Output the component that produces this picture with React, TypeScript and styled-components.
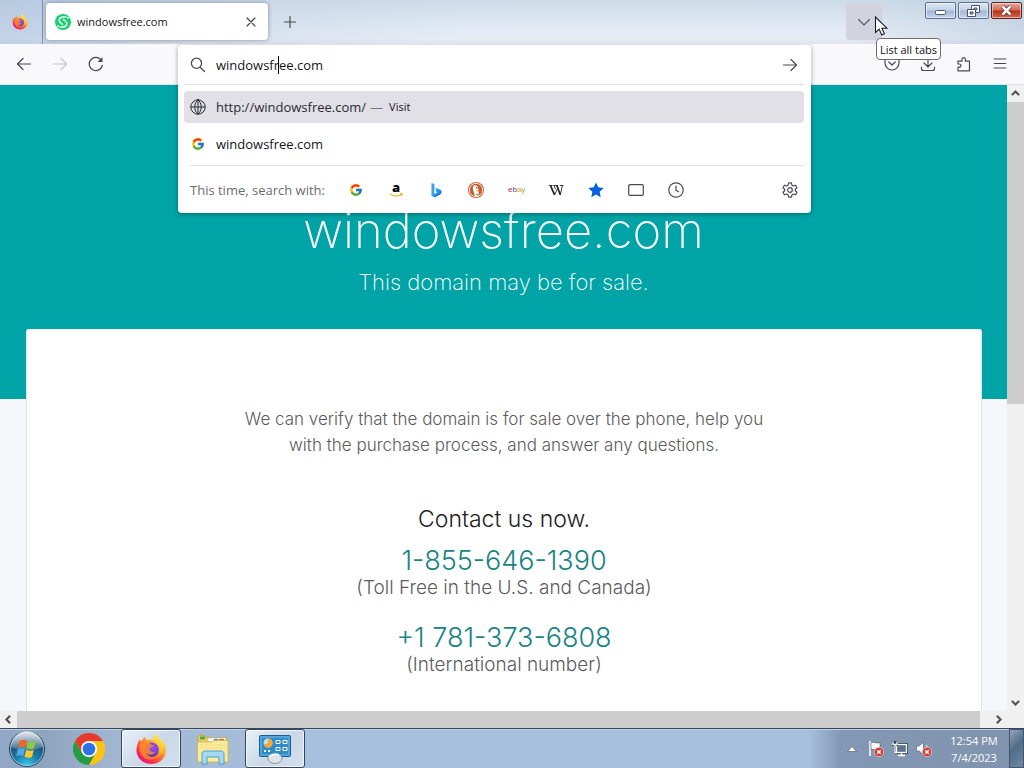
import React from "react";
import styled, { createGlobalStyle, css } from "styled-components";
import { FcGoogle } from "react-icons/fc";

const uiFont = `"Open Sans", "Noto Sans", sans-serif`;
const siteFont = `Inter, "Liberation Sans", sans-serif`;

const GlobalStyle = createGlobalStyle`
  * { box-sizing: border-box; }
  body { margin: 0; overflow: hidden; background: #fff; }
  button, input { font: inherit; color: inherit; border: 0; background: none; padding: 0; margin: 0; }
  h1, h2, p { margin: 0; font-weight: inherit; }
  svg { display: block; flex: none; }
`;

const Desktop = styled.div`
  display: flex;
  flex-direction: column;
  height: 100vh;
  font: 13px/18px ${uiFont};
  color: #15141a;
`;

/* ---------- tab strip ---------- */

const TabStrip = styled.header`
  position: relative;
  z-index: 3;
  display: flex;
  align-items: flex-start;
  height: 44px;
  padding-top: 3px;
  background:
    linear-gradient(90deg, rgba(160, 184, 216, 0.5), rgba(190, 205, 228, 0.3) 25%, rgba(255, 255, 255, 0) 45%, rgba(255, 255, 255, 0) 82%, rgba(170, 192, 215, 0.45)),
    linear-gradient(#cddbe8, #dbe6f1 45%, #e8edf5 88%, #dfe4ec);
`;

const PinnedTab = styled.button`
  display: grid;
  place-items: center;
  width: 40px;
  height: 38px;
`;

const Divider = styled.span`
  width: 1px;
  height: 44px;
  margin: -3px 3px 0 2px;
  background: #8593aa;
`;

const Tab = styled.div`
  display: flex;
  align-items: center;
  gap: 6px;
  width: 222px;
  height: 37px;
  padding: 0 9px;
  border-radius: 4px;
  background: #fff;
  box-shadow: 0 0 4px rgba(60, 70, 90, 0.5);
  font-size: 11px;
`;

const TabTitle = styled.span`
  flex: 1;
`;

const IconButton = styled.button<{ $size?: number }>`
  display: grid;
  place-items: center;
  flex: none;
  width: ${(p) => p.$size ?? 36}px;
  height: ${(p) => p.$size ?? 36}px;
  border-radius: 4px;
  color: #4a4953;
`;

const NewTab = styled(IconButton)`
  margin-left: 4px;
  height: 38px;
`;

const ListTabs = styled(IconButton)`
  height: 37px;
  margin-left: auto;
  background: #d2d3df;
  color: #5b5b66;
`;

const WindowControls = styled.div`
  display: flex;
  gap: 2px;
  margin: -1px 2px 0 43px;
`;

const WindowButton = styled.button<{ $close?: boolean }>`
  display: grid;
  place-items: center;
  width: 31px;
  height: 17px;
  border: 1px solid #5d6f8c;
  border-radius: 2px;
  box-shadow: inset 0 0 0 1px rgba(255, 255, 255, 0.5);
  background: linear-gradient(#dbe6f3, #c3d2e6 48%, #a3b7d3 52%, #c2d4e8);
  ${(p) =>
    p.$close &&
    css`
      border-color: #5a2323;
      background: linear-gradient(#e6a99b, #d46b57 48%, #b8311b 52%, #d4674b);
    `}
`;

const Tooltip = styled.div`
  position: absolute;
  top: 38px;
  right: 83px;
  height: 22px;
  padding: 2px 3px 0;
  border: 1px solid #6b6b73;
  border-radius: 4px;
  background: #fff;
  font-size: 11px;
  color: #111;
`;

const Pointer = styled.svg`
  position: absolute;
  top: 16px;
  right: 135px;
`;

/* ---------- toolbar and address panel ---------- */

const Toolbar = styled.nav`
  position: relative;
  z-index: 2;
  display: flex;
  justify-content: space-between;
  align-items: center;
  height: 41px;
  padding: 0 6px;
  border-bottom: 1px solid #dfe3e8;
  background: #f9f9fb;
`;

const ButtonGroup = styled.div`
  display: flex;
`;

const Panel = styled.section`
  position: absolute;
  top: 1px;
  left: 178px;
  right: 213px;
  padding: 0 7px 6px 6px;
  border-radius: 4px;
  background: #fff;
  box-shadow: 0 1px 5px rgba(0, 0, 0, 0.35);
`;

const AddressRow = styled.form`
  position: relative;
  display: flex;
  align-items: center;
  gap: 10px;
  height: 40px;
  padding: 0 6px;
  border-bottom: 1px solid #e4e4e8;
  color: #4a4953;
`;

const AddressInput = styled.input`
  flex: 1;
  min-width: 0;
  height: 24px;
  outline: 0;
  color: #15141a;
`;

const Caret = styled.span`
  position: absolute;
  left: 94px;
  top: 11px;
  width: 1px;
  height: 18px;
  background: #000;
`;

const Results = styled.ul`
  list-style: none;
  margin: 0;
  padding: 6px 0 5px;
`;

const Result = styled.li<{ $selected?: boolean }>`
  display: flex;
  align-items: center;
  gap: 10px;
  height: 32px;
  margin-bottom: 5px;
  padding: 0 6px;
  border-radius: 4px;
  background: ${(p) => (p.$selected ? "#e0e0e6" : "transparent")};
  color: ${(p) => (p.$selected ? "#2b2a33" : "#15141a")};
  &:last-child { margin: 0; }
`;

const Dash = styled.span`
  margin-left: -6px;
  color: #77777f;
`;

const Visit = styled.span`
  font-size: 11px;
  margin-left: -4px;
  color: #15141a;
`;

const Engines = styled.div`
  display: flex;
  align-items: center;
  height: 42px;
  padding-top: 7px;
  margin: 0 0 0 6px;
  border-top: 1px solid #e4e4e8;
  color: #6c6b73;
`;

const EnginesLabel = styled.span`
  width: 146px;
  white-space: nowrap;
`;

const EngineButton = styled(IconButton)`
  width: 40px;
  &:last-child { margin-left: auto; width: 28px; }
`;

const GoogleMark = styled(FcGoogle)`
  width: 14px;
  height: 14px;
  margin: 0 1px;
`;

/* ---------- page ---------- */

const Browser = styled.div`
  flex: 1;
  min-height: 0;
  display: grid;
  grid-template: minmax(0, 1fr) 17px / minmax(0, 1fr) 17px;
`;

const Viewport = styled.main`
  display: flex;
  flex-direction: column;
  overflow: hidden;
  background: #f5f7fa;
  font-family: ${siteFont};
  font-weight: 300;
  text-align: center;
`;

const Hero = styled.div`
  flex: none;
  height: 314px;
  padding-top: 118px;
  background: #00a4a6;
  color: #fff;
  font-weight: 200;
`;

const DomainName = styled.h1`
  font-size: 49px;
  line-height: 56px;
`;

const Tagline = styled.p`
  margin-top: 7px;
  font-size: 22px;
  line-height: 32px;
`;

const Card = styled.article`
  flex: 1 0 auto;
  margin: -70px 25px 0 26px;
  padding: 77px 24px 40px;
  border: 1px solid #dfe4e8;
  border-top: 0;
  border-bottom: 0;
  border-radius: 3px 3px 0 0;
  background: #fff;
  color: #5c5c5c;
`;

const Lead = styled.p`
  max-width: 540px;
  margin: 0 auto;
  font-size: 17px;
  line-height: 26px;
`;

const ContactTitle = styled.h2`
  margin: 45px 0 10px;
  font-size: 23px;
  line-height: 32px;
  color: #222;
`;

const Contact = styled.div`
  margin-bottom: 24px;
`;

const Phone = styled.a`
  display: block;
  font-size: 27px;
  line-height: 32px;
  color: #188484;
  text-decoration: none;
`;

const PhoneNote = styled.p`
  font-size: 19px;
  line-height: 21px;
`;

const ScrollBar = styled.div<{ $horizontal?: boolean }>`
  display: flex;
  flex-direction: ${(p) => (p.$horizontal ? "row" : "column")};
  background: #f0f0f0;
`;

const ScrollArrow = styled.button`
  display: grid;
  place-items: center;
  flex: none;
  width: 17px;
  height: 17px;
  color: #505050;
`;

const Track = styled.div<{ $horizontal?: boolean }>`
  flex: 1;
  display: flex;
  flex-direction: ${(p) => (p.$horizontal ? "row" : "column")};
`;

const Thumb = styled.div<{ $share: number }>`
  flex: 0 0 ${(p) => p.$share}%;
  background: #cdcdcd;
`;

const Corner = styled.div`
  background: #f0f0f0;
`;

/* ---------- taskbar ---------- */

const Taskbar = styled.footer`
  display: flex;
  align-items: stretch;
  height: 40px;
  border-top: 1px solid #33475f;
  box-shadow: inset 0 1px 0 #c3d3e4;
  background: linear-gradient(90deg, #93a8c6, #8ea3bd 4%, #a3b7d3 12%, #a6c0dd 30%, #a6c0dd 79%, #8398b4 82%, #8093ae);
`;

const StartButton = styled.button`
  width: 54px;
  margin-right: 5px;
  display: grid;
  place-items: center;
`;

const TaskButton = styled.button<{ $open?: boolean }>`
  display: grid;
  place-items: center;
  width: 60px;
  margin-right: 2px;
  border-radius: 3px;
  ${(p) =>
    p.$open &&
    css`
      border: 1px solid #34465e;
      box-shadow: inset 0 0 0 1px rgba(255, 255, 255, 0.7);
      background: linear-gradient(135deg, #e9f0f8, #c9d7e8 55%, #d5e1ef);
    `}
`;

const Tray = styled.div`
  display: flex;
  align-items: center;
  margin-left: auto;
  color: #fff;
`;

const TrayButton = styled.button`
  display: grid;
  place-items: center;
  width: 24px;
  height: 24px;
`;

const Clock = styled.time`
  width: 66px;
  margin: 0 2px 0 5px;
  font-size: 11px;
  line-height: 17px;
  text-align: center;
`;

const ShowDesktop = styled.button`
  align-self: stretch;
  width: 15px;
  border: 1px solid #42566f;
  background: linear-gradient(135deg, #93a7be, #536c87 45%, #7088a3);
`;

/* ---------- drawings ---------- */

const Line = ({ d, size = 16, w = 1.2 }: { d: string; size?: number; w?: number }) => (
  <svg width={size} height={size} viewBox="0 0 16 16" fill="none" stroke="currentColor" strokeWidth={w} strokeLinecap="round" strokeLinejoin="round">
    <path d={d} />
  </svg>
);

const FirefoxLogo = ({ size }: { size: number }) => (
  <svg width={size} height={size} viewBox="0 0 32 32">
    <defs>
      <linearGradient id="ffBody" x1="0.85" y1="0.1" x2="0.2" y2="0.95">
        <stop offset="0" stopColor="#fff044" />
        <stop offset="0.3" stopColor="#ffb02e" />
        <stop offset="0.55" stopColor="#ff6a30" />
        <stop offset="0.8" stopColor="#fa2c53" />
        <stop offset="1" stopColor="#e31587" />
      </linearGradient>
      <radialGradient id="ffCore" cx="0.6" cy="0.3" r="0.8">
        <stop offset="0" stopColor="#a34bee" />
        <stop offset="0.6" stopColor="#6a45d8" />
        <stop offset="1" stopColor="#45278d" />
      </radialGradient>
      <linearGradient id="ffFlame" x1="0.7" y1="0" x2="0.4" y2="1">
        <stop offset="0" stopColor="#fff36b" />
        <stop offset="0.5" stopColor="#ffc82e" />
        <stop offset="1" stopColor="#ff8026" />
      </linearGradient>
    </defs>
    <path fill="url(#ffBody)" d="M2.2 12.5C2.6 9.8 3.7 7.5 5 6c.1 1 .4 1.9.8 2.5C7.3 7 8.6 6 9 3.8c.7.3 2.200 2.300 2.700 3.500 2-.9 4.500-1 6.300-.4-.2-2.500 1-5.200 3.200-6.400.2 2.800 2.600 4.300 4.700 6.800.3.400.8 1 1 1.500.1-.8 0-1.500-.2-2.200 2.700 3 4.300 6.700 4.300 10.400C31 25 24.700 31 16.300 31 8 31 1.400 25 1.400 17c0-1.600.3-3.100.8-4.500z" />
    <path fill="url(#ffFlame)" d="M18 6.900c-.2-2.500 1-5.200 3.200-6.400.2 2.800 2.600 4.300 4.700 6.800C28.500 10.500 29 14 27.500 18.500 26 23.500 22 26 17.500 25.800c5-1.500 7.500-5.500 6.300-10C22.900 12 20.500 9 18 6.900z" />
    <circle cx="16.600" cy="16.700" r="7.200" fill="url(#ffCore)" />
    <path fill="#ff8a2a" d="M4.500 11.500c2-2.500 5.500-3.400 8.300-2.200 1.500.5 2.700 1.500 3.200 2.500 1.200.1 2.300.3 2.500.8-.2 1.200-1.800 2-3.800 2.500-.4.3-.3 1.200.1 2 1 2 3.300 2.500 5.500 1.300-1.800 3.400-6 4.200-9 2.200 2.200 3.700 7 4.800 10.500 2.600-3 4.200-9.500 4.600-13.300.7C5.500 21.500 4 16.500 4.500 11.500z" opacity="0.85" />
  </svg>
);

const SiteIcon = () => (
  <svg width="16" height="16" viewBox="0 0 16 16">
    <circle cx="8" cy="8" r="8" fill="#12d26b" />
    <g fill="none" stroke="#fff" strokeWidth="1.500" strokeLinecap="round">
      <path d="M9.800 3C6.500 2.600 4 4.200 4.200 6.600c.2 1.900 2 2.600 3.300 3.800" />
      <path d="M6.200 13c3.300.4 5.800-1.200 5.600-3.600-.2-1.900-2-2.600-3.300-3.800" />
    </g>
    <path d="M9.500 2l4.800 1.500-1 1.500zM6.500 14l-4.800-1.500 1-1.500z" fill="#fff" />
  </svg>
);

const Globe = () => (
  <Line d="M8 .8a7.200 7.200 0 1 0 0 14.400A7.200 7.200 0 0 0 8 .8zM8 .8c-2.300 2-3.200 4.400-3.200 7.200s.9 5.200 3.200 7.200c2.300-2 3.200-4.400 3.200-7.200S10.300 2.800 8 .8zM1 8h14M8 1v14" w={1} />
);

const Amazon = () => (
  <svg width="16" height="18" viewBox="0 0 16 18">
    <text x="8" y="11" textAnchor="middle" fontFamily="Open Sans, sans-serif" fontWeight="800" fontSize="13" fill="#000">a</text>
    <path d="M2 13c3.500 2.600 8.200 2.600 11.500.3M11.800 12.800l2.200-.1-.6 2.200" fill="none" stroke="#f0b51e" strokeWidth="1.300" />
  </svg>
);

const Bing = () => (
  <svg width="16" height="16" viewBox="0 0 16 16">
    <defs>
      <linearGradient id="bing" x1="0" y1="0" x2="1" y2="1">
        <stop offset="0" stopColor="#2fc4f0" />
        <stop offset="1" stopColor="#1b5fd6" />
      </linearGradient>
    </defs>
    <path d="M3.500 1l2.900 1.100v10.400L3.500 14.200z" fill="#3aa0f0" />
    <path d="M7.500 5.800l4.800 2c1 .5 1.400 1.500 1.300 2.600-.1 1-.6 1.700-1.400 2.200L6.800 15.500l-3.300-1.700 5.800-3.400-1-.6z" fill="url(#bing)" />
  </svg>
);

const Duck = () => (
  <svg width="16" height="16" viewBox="0 0 16 16">
    <circle cx="8" cy="8" r="8" fill="#cf5a2f" />
    <circle cx="8" cy="8" r="6.700" fill="none" stroke="#fff" strokeWidth="0.900" />
    <path d="M5 4c1.600-1.300 4.500-.8 5 1.700.3 1.300.1 2 .4 3.200l.4 4.600c-1.300.6-2.600.8-4 .5C6.500 11.500 5 8.500 4.800 6.500 4.700 5.500 5.200 5 5 4z" fill="#fff" />
    <path d="M8.200 8.200c1.200-.6 2.300-.6 3.200-.2-.8.900-1.800 1.300-3.200 1.200z" fill="#fdb924" />
    <circle cx="8.700" cy="5.800" r="0.700" fill="#334" />
    <path d="M8 11.500l2.500.8-.1 1.300L8 13z" fill="#55b445" />
  </svg>
);

const Ebay = () => (
  <svg width="18" height="16" viewBox="0 0 18 16">
    <text x="1" y="10" fontFamily="Liberation Sans, sans-serif" fontSize="8">
      <tspan fill="#c4324d">e</tspan>
      <tspan fill="#3f4fb4">b</tspan>
      <tspan fill="#dda51c">a</tspan>
      <tspan fill="#86b817">y</tspan>
    </text>
  </svg>
);

const Wikipedia = () => (
  <svg width="16" height="16" viewBox="0 0 16 16" fill="none" stroke="#222">
    <path d="M2.600 3.800l4 9M8.900 3.800l3.400 9" strokeWidth="1.700" />
    <path d="M6.600 12.800l3.200-6.500M12.300 12.800l2-9M6 3.800l1.600 3.500" strokeWidth="0.900" />
    <path d="M.8 3.500h3.700M5.300 3.500h5M11.800 3.500h3.700" strokeWidth="0.900" />
  </svg>
);

const Star = () => (
  <svg width="16" height="16" viewBox="0 0 16 16">
    <path d="M8 .4l2.300 4.900 5.400.7-4 3.700 1 5.500L8 12.600l-4.700 2.600 1-5.500-4-3.700 5.400-.7z" fill="#0561e0" />
  </svg>
);

const Gear = () => (
  <Line d="M6.600.8h2.800l.5 2.300 1.500.9 2.200-.8 1.400 2.500-1.700 1.500v1.600l1.700 1.500-1.400 2.500-2.200-.8-1.500.9-.5 2.300H6.600l-.5-2.300-1.500-.9-2.200.8L1 10.300l1.700-1.500V7.200L1 5.700l1.400-2.500 2.200.8 1.500-.9zM8 5.700a2.300 2.300 0 1 0 0 4.600 2.300 2.300 0 0 0 0-4.600z" />
);

const StartOrb = () => (
  <svg width="38" height="38" viewBox="0 0 38 38">
    <defs>
      <radialGradient id="orb" cx="0.5" cy="1" r="0.9">
        <stop offset="0" stopColor="#3fd0f5" />
        <stop offset="0.4" stopColor="#1b7fae" />
        <stop offset="0.75" stopColor="#1f5277" />
        <stop offset="1" stopColor="#5d7f99" />
      </radialGradient>
      <linearGradient id="orbShine" x1="0" y1="0" x2="0" y2="1">
        <stop offset="0" stopColor="#fff" stopOpacity="0.8" />
        <stop offset="1" stopColor="#fff" stopOpacity="0.15" />
      </linearGradient>
    </defs>
    <circle cx="19" cy="19" r="17.500" fill="url(#orb)" stroke="#28445c" />
    <circle cx="19" cy="19" r="16.500" fill="none" stroke="#b9dcea" strokeOpacity="0.700" />
    <path d="M3 17a16 16 0 0 1 32 0c-8 4-24 4-32 0z" fill="url(#orbShine)" />
    <path d="M12 10.500c2.500-1.200 4.800-1 6.800.2l-1.600 7.100c-2.200-1.200-4.500-1.300-7-.2z" fill="#ee6526" />
    <path d="M20 11.200c2.300 1.200 5 1.300 7.700.2L26 18.500c-2.500 1.100-5 1-7.500-.2z" fill="#8fca3a" />
    <path d="M9.900 18.900c2.500-1.100 4.800-1 7 .2l-1.700 7.200c-2-1.300-4.400-1.300-7-.1z" fill="#4fa9e6" />
    <path d="M18.200 19.700c2.300 1.200 5 1.300 7.500.1L24 27c-2.500 1.200-5 1.100-7.500-.2z" fill="#fcc930" />
  </svg>
);

const Chrome = () => (
  <svg width="32" height="32" viewBox="0 0 32 32">
    <circle cx="16" cy="16" r="16" fill="#fbc315" />
    <path d="M2.140 8a16 16 0 0 0 13.860 24l6.900-12H9.070z" fill="#269b49" />
    <path d="M2.140 8A16 16 0 0 1 29.860 8H16v8l-7 4z" fill="#e33b2e" />
    <path d="M29.860 8A16 16 0 0 1 16 32l6.930-12L16 8z" fill="#fbc315" />
    <circle cx="16" cy="16" r="8" fill="#fff" />
    <circle cx="16" cy="16" r="6.300" fill="#2c71e8" />
  </svg>
);

const Explorer = () => (
  <svg width="34" height="32" viewBox="0 0 34 32">
    <path d="M2 4c0-1 .6-1.500 1.500-1.500H9L11 5h20v23H2z" fill="#e9ce6a" stroke="#c9a63e" />
    <path d="M4 3.500h5v3H4z" fill="#55a843" />
    <path d="M12 5h18v4H12z" fill="#fff" stroke="#c8b36a" strokeWidth="0.600" />
    <path d="M18 6h4v2h-4z" fill="#4a83c9" />
    <path d="M23 6h5v2h-5z" fill="#d5673d" />
    <path d="M1.500 9h14l2-1.500H32V29H1.500z" fill="#fbeb9f" stroke="#d6b851" />
    <path d="M4 12h26M4 15h26" stroke="#f2dc82" />
    <path d="M6 31V21c0-2 1-3 3-3h16c2 0 3 1 3 3v10h-5v-7H11v7z" fill="#a3d9f1" stroke="#539cc9" />
  </svg>
);

const ControlPanel = () => (
  <svg width="34" height="30" viewBox="0 0 34 30">
    <rect x="1.500" y="1.500" width="31" height="21" rx="1" fill="#2f8cc7" stroke="#1c5d8f" />
    <rect x="3" y="3" width="28" height="18" fill="none" stroke="#74bde8" />
    <circle cx="10" cy="9" r="4.500" fill="#bfe3f5" />
    <path d="M10 9V4.500A4.500 4.500 0 1 1 5.800 10.500z" fill="#f6a338" />
    <path d="M18 6.500h4v3h-4zM25 6.500h4v3h-4zM18 13.500h4v3h-4zM25 13.500h4v3h-4z" fill="#2f8cc7" stroke="#fff" />
    <path d="M6 17h2M10 17h2" stroke="#fff" strokeWidth="2" />
    <ellipse cx="17" cy="24.500" rx="7" ry="5" fill="#dfe4e8" stroke="#8b959d" />
    <path d="M11 23a7 5 0 0 1 10-2" fill="none" stroke="#fff" strokeWidth="1.500" />
  </svg>
);

const Badge = () => (
  <>
    <circle cx="12" cy="12" r="4.700" fill="#d63a35" stroke="#f1c0bb" strokeWidth="0.800" />
    <path d="M10.200 10.200l3.600 3.600M13.800 10.200l-3.600 3.600" stroke="#fff" strokeWidth="1.400" />
  </>
);

const Flag = () => (
  <svg width="18" height="18" viewBox="0 0 18 18">
    <path d="M3 1v15" stroke="#fff" strokeWidth="1.600" />
    <path d="M4 2.500c3-1.200 4.500 1.500 9 .2v7c-4 1.300-6-1.200-9 0z" fill="#fff" stroke="#46566c" strokeWidth="0.600" />
    <Badge />
  </svg>
);

const Network = () => (
  <svg width="18" height="18" viewBox="0 0 18 18">
    <rect x="5.500" y="4.500" width="10" height="8" fill="#5f738d" stroke="#2f3e54" strokeWidth="3" />
    <rect x="5.500" y="4.500" width="10" height="8" fill="#5f738d" stroke="#fff" strokeWidth="1.300" />
    <path d="M10.500 12.500v3M7 15.500h7" stroke="#fff" strokeWidth="1.300" />
    <path d="M1 1h6v5H5v6H3V6H1z" fill="#2f3e54" />
    <path d="M2 1.500v3h4v-3M4 4.500v8h2" fill="none" stroke="#fff" strokeWidth="1.300" />
  </svg>
);

const Volume = () => (
  <svg width="18" height="18" viewBox="0 0 18 18">
    <path d="M1.500 6h2.800L8.500 2v13l-4.200-4H1.500z" fill="#fff" stroke="#46566c" strokeWidth="0.600" />
    <path d="M11 5c.8 1 1 2 1 3" fill="none" stroke="#fff" />
    <Badge />
  </svg>
);

const arrows = {
  up: "M3.500 10L8 5.500l4.500 4.500",
  down: "M3.500 6L8 10.500 12.500 6",
  left: "M10 3.500L5.500 8l4.500 4.500",
  right: "M6 3.500L10.500 8 6 12.500",
};

const Arrow = ({ to }: { to: keyof typeof arrows }) => (
  <svg width="13" height="13" viewBox="0 0 16 16" fill="none" stroke="currentColor" strokeWidth="2.600">
    <path d={arrows[to]} />
  </svg>
);

const engines: [string, React.ReactNode][] = [
  ["Google", <GoogleMark />],
  ["Amazon", <Amazon />],
  ["Bing", <Bing />],
  ["DuckDuckGo", <Duck />],
  ["eBay", <Ebay />],
  ["Wikipedia", <Wikipedia />],
  ["Bookmarks", <Star />],
  ["Tabs", <Line d="M2 2.600h12a1.300 1.300 0 0 1 1.300 1.300v8.200a1.300 1.300 0 0 1-1.300 1.300H2a1.300 1.300 0 0 1-1.300-1.300V3.900A1.300 1.300 0 0 1 2 2.600z" />],
  ["History", <Line d="M8 .8a7.200 7.200 0 1 0 0 14.400A7.200 7.200 0 0 0 8 .8zM8 4v4.200l2.600 1.600" />],
];

const contacts = [
  { number: "1-855-646-1390", note: "(Toll Free in the U.S. and Canada)" },
  { number: "+1 781-373-6808", note: "(International number)" },
];

export default function App() {
  return (
    <Desktop>
      <GlobalStyle />
      <TabStrip>
        <PinnedTab aria-label="Firefox View"><FirefoxLogo size={16} /></PinnedTab>
        <Divider />
        <Tab>
          <SiteIcon />
          <TabTitle>windowsfree.com</TabTitle>
          <IconButton $size={16} aria-label="Close tab"><Line d="M4 4l8 8M12 4l-8 8" /></IconButton>
        </Tab>
        <NewTab aria-label="New tab"><Line d="M8 2.500v11M2.500 8h11" /></NewTab>
        <ListTabs aria-label="List all tabs"><Line d="M2.500 5.500L8 11l5.500-5.500" /></ListTabs>
        <WindowControls>
          <WindowButton aria-label="Minimize">
            <svg width="13" height="11" viewBox="0 0 13 11"><rect x="1.500" y="5.500" width="10" height="4" rx="1" fill="#fff" stroke="#46556e" /></svg>
          </WindowButton>
          <WindowButton aria-label="Restore">
            <svg width="13" height="12" viewBox="0 0 13 12" fill="#fff" stroke="#46556e">
              <path d="M4.500.5h8v7h-8zM7 3h3v2H7z" fillRule="evenodd" />
              <path d="M.5 4.500h8v7h-8zM3 7h3v2H3z" fillRule="evenodd" />
            </svg>
          </WindowButton>
          <WindowButton $close aria-label="Close">
            <svg width="13" height="11" viewBox="0 0 13 11">
              <path d="M2.500 1.500l8 8M10.500 1.500l-8 8" stroke="#5b2a2a" strokeWidth="4" />
              <path d="M2.500 1.500l8 8M10.500 1.500l-8 8" stroke="#fff" strokeWidth="2.500" />
            </svg>
          </WindowButton>
        </WindowControls>
        <Pointer width="15" height="21" viewBox="0 0 15 21">
          <path d="M1.500 1v15.500l3.700-3.400 2.500 5.900 2.700-1.200-2.500-5.600h5z" fill="#fff" stroke="#1b1f2b" strokeWidth="1.100" />
        </Pointer>
        <Tooltip role="tooltip">List all tabs</Tooltip>
      </TabStrip>

      <Toolbar>
        <ButtonGroup>
          <IconButton aria-label="Back"><Line d="M1.500 8h13M7 2.500L1.500 8 7 13.500" /></IconButton>
          <IconButton aria-label="Forward" disabled>
            <svg width="16" height="16" viewBox="0 0 16 16" fill="none" stroke="#c4c4c9" strokeWidth="1.200" strokeLinecap="round"><path d="M1.500 8h13M9 2.500L14.500 8 9 13.500" /></svg>
          </IconButton>
          <IconButton aria-label="Reload">
            <svg width="16" height="16" viewBox="0 0 16 16" fill="none" stroke="currentColor" strokeWidth="1.300" strokeLinecap="round">
              <path d="M14.300 9.500A6.600 6.600 0 1 1 12.800 3.600" />
              <path d="M14.500 1v5h-5z" fill="currentColor" stroke="none" />
            </svg>
          </IconButton>
        </ButtonGroup>
        <ButtonGroup>
          <IconButton aria-label="Save to Pocket"><Line d="M2.500 2h11A1.500 1.500 0 0 1 15 3.500V7a7 7 0 0 1-14 0V3.500A1.500 1.500 0 0 1 2.500 2zM4.800 6L8 9l3.200-3" /></IconButton>
          <IconButton aria-label="Downloads"><Line d="M8 1v9.500M4 7l4 4 4-4M1.500 11v1.500a2 2 0 0 0 2 2h9a2 2 0 0 0 2-2V11" /></IconButton>
          <IconButton aria-label="Extensions"><Line d="M2 5.200h4V3.400a1.700 1.700 0 1 1 3.400 0v1.800h4.100v9.600H2v-3.600h1.400a1.600 1.600 0 1 0 0-3.200H2z" /></IconButton>
          <IconButton aria-label="Open menu"><Line d="M2.200 3h11.600M2.200 7.500h11.600M2.200 12h11.600" /></IconButton>
        </ButtonGroup>

        <Panel>
          <AddressRow onSubmit={(e) => e.preventDefault()}>
            <Line d="M6.500 1.200a5.100 5.100 0 1 0 0 10.200 5.100 5.100 0 0 0 0-10.200zM10.200 10.200l4.300 4.300" w={1.3} />
            <AddressInput aria-label="Search or enter address" defaultValue="windowsfree.com" />
            <Caret />
            <IconButton $size={16} aria-label="Go"><Line d="M1.500 8h13M9 2.500L14.500 8 9 13.500" /></IconButton>
          </AddressRow>
          <Results>
            <Result $selected><Globe /><span>http://windowsfree.com/</span><Dash>—</Dash><Visit>Visit</Visit></Result>
            <Result><GoogleMark /><span>windowsfree.com</span></Result>
          </Results>
          <Engines>
            <EnginesLabel>This time, search with:</EnginesLabel>
            {engines.map(([name, icon]) => (
              <EngineButton key={name} aria-label={name}>{icon}</EngineButton>
            ))}
            <EngineButton aria-label="Search settings"><Gear /></EngineButton>
          </Engines>
        </Panel>
      </Toolbar>

      <Browser>
        <Viewport>
          <Hero>
            <DomainName>windowsfree.com</DomainName>
            <Tagline>This domain may be for sale.</Tagline>
          </Hero>
          <Card>
            <Lead>We can verify that the domain is for sale over the phone, help you with the purchase process, and answer any questions.</Lead>
            <ContactTitle>Contact us now.</ContactTitle>
            {contacts.map((c) => (
              <Contact key={c.number}>
                <Phone href={`tel:${c.number}`}>{c.number}</Phone>
                <PhoneNote>{c.note}</PhoneNote>
              </Contact>
            ))}
          </Card>
        </Viewport>
        <ScrollBar>
          <ScrollArrow aria-label="Scroll up"><Arrow to="up" /></ScrollArrow>
          <Track><Thumb $share={51} /></Track>
          <ScrollArrow aria-label="Scroll down"><Arrow to="down" /></ScrollArrow>
        </ScrollBar>
        <ScrollBar $horizontal>
          <ScrollArrow aria-label="Scroll left"><Arrow to="left" /></ScrollArrow>
          <Track $horizontal><Thumb $share={99} /></Track>
          <ScrollArrow aria-label="Scroll right"><Arrow to="right" /></ScrollArrow>
        </ScrollBar>
        <Corner />
      </Browser>

      <Taskbar>
        <StartButton aria-label="Start"><StartOrb /></StartButton>
        <TaskButton aria-label="Chrome"><Chrome /></TaskButton>
        <TaskButton $open aria-label="Firefox"><FirefoxLogo size={32} /></TaskButton>
        <TaskButton aria-label="File Explorer"><Explorer /></TaskButton>
        <TaskButton $open aria-label="Control Panel"><ControlPanel /></TaskButton>
        <Tray>
          <TrayButton aria-label="Show hidden icons">
            <svg width="10" height="6" viewBox="0 0 10 6"><path d="M5 .5L9.500 5.500h-9z" fill="#fff" stroke="#46566c" strokeWidth="0.600" /></svg>
          </TrayButton>
          <TrayButton aria-label="Action center"><Flag /></TrayButton>
          <TrayButton aria-label="Network"><Network /></TrayButton>
          <TrayButton aria-label="Volume"><Volume /></TrayButton>
          <Clock>12:54 PM<br />7/4/2023</Clock>
          <ShowDesktop aria-label="Show desktop" />
        </Tray>
      </Taskbar>
    </Desktop>
  );
}
